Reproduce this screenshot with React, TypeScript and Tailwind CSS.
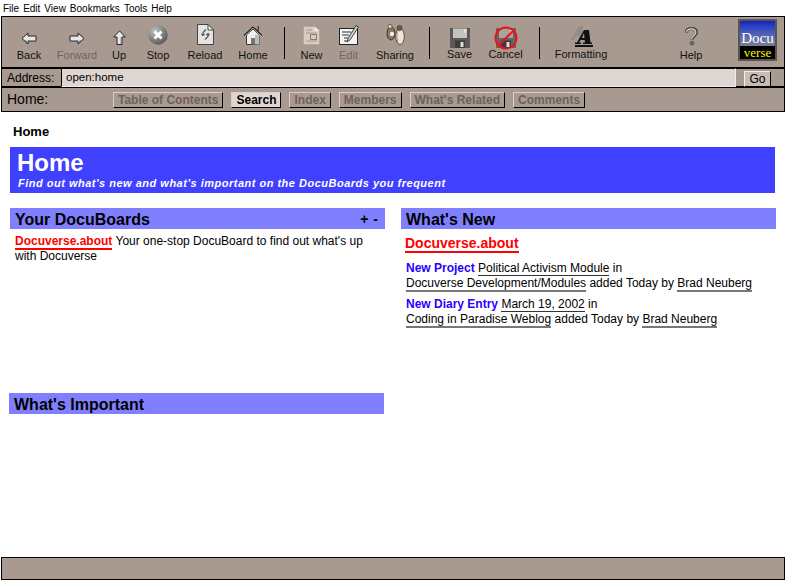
import type { ReactNode } from 'react';

const sans = { fontFamily: '"Liberation Sans", Arial, sans-serif' };

function Arrow({ flip }: { flip?: boolean }) {
  return (
    <svg width="16" height="13" viewBox="0 0 16 13" style={flip ? { transform: 'scaleX(-1)' } : undefined}>
      <path d="M1 6.5 L7 1 V4 H15 V9 H7 V12 Z" fill="#e6e6e6" stroke="#222" strokeWidth="1" />
      <path d="M7 8 H14.5 V9 H7 Z M7 9 V11 L3 7.5 Z" fill="#8c8c8c" />
    </svg>
  );
}

function UpIcon() {
  return (
    <svg width="13" height="15" viewBox="0 0 13 15">
      <path d="M6.5 0.8 L12.3 7 H9 V14.5 H4 V7 H0.7 Z" fill="#e8e8e8" stroke="#222" />
      <path d="M7.5 7.5 H8.5 V14 H7.5 Z" fill="#888" />
    </svg>
  );
}

function StopIcon() {
  return (
    <svg width="20" height="20" viewBox="0 0 20 20">
      <defs>
        <radialGradient id="stopBall" cx="35%" cy="30%" r="75%">
          <stop offset="0%" stopColor="#c4c4c4" />
          <stop offset="100%" stopColor="#555" />
        </radialGradient>
      </defs>
      <circle cx="10" cy="10" r="9.7" fill="url(#stopBall)" />
      <path d="M6.5 6.5 L13.5 13.5 M13.5 6.5 L6.5 13.5" stroke="#fff" strokeWidth="2.8" />
    </svg>
  );
}

function ReloadIcon() {
  return (
    <svg width="17" height="21" viewBox="0 0 17 21">
      <path d="M0.5 0.5 H11 L16.5 6 V20.5 H0.5 Z" fill="#e4e4e4" stroke="#444" />
      <path d="M11 0.5 V6 H16.5 Z" fill="#fff" stroke="#444" />
      <path d="M9 5.5 L6 8.5 V11.5 M6 11.5 L4.5 10 M6 11.5 L7.5 10" fill="none" stroke="#555" strokeWidth="1.2" />
      <path d="M8 15.5 L11 12.5 V9.5 M11 9.5 L9.5 11 M11 9.5 L12.5 11" fill="none" stroke="#555" strokeWidth="1.2" />
    </svg>
  );
}

function HomeIcon() {
  return (
    <svg width="20" height="20" viewBox="0 0 20 20">
      <path d="M14.5 1 H16 V6 H14.5 Z" fill="#444" />
      <path d="M1 10.5 L10 2 L19 10.5" fill="#f2f2f2" stroke="#222" strokeWidth="1.2" />
      <path d="M3.5 10 L10 4 L16.5 10 V19.5 H3.5 Z" fill="#f0f0f0" stroke="#333" />
      <path d="M12 9.5 L16.5 10 V19.5 H12 Z" fill="#bbb" />
      <rect x="8" y="13" width="4" height="6.5" fill="#777" />
    </svg>
  );
}

function NewIcon() {
  return (
    <svg width="17" height="19" viewBox="0 0 17 19">
      <path d="M0.5 0.5 H11.5 L16.5 5 V18.5 H0.5 Z" fill="#d8cdc0" stroke="#b5a898" />
      <path d="M11.5 0.5 V5 H16.5 Z" fill="#f3eee8" />
      <path d="M3 4 H9 M3 7 H14 M3 15 H14" stroke="#a89a8a" />
      <rect x="7.5" y="8.5" width="6" height="5" fill="none" stroke="#8a7d6f" />
    </svg>
  );
}

function EditIcon() {
  return (
    <svg width="20" height="20" viewBox="0 0 20 20">
      <rect x="0.5" y="3.5" width="18" height="16" fill="#f4f4f4" stroke="#222" />
      <path d="M3 7 H12 M3 10 H10 M5 13 H9 M5 16 H8" stroke="#333" />
      <path d="M17 0.5 L19.5 2 L11 15 L8 17 L9 13.5 Z" fill="#ccc" stroke="#222" strokeWidth="0.8" />
    </svg>
  );
}

function SharingIcon() {
  return (
    <svg width="19" height="21" viewBox="0 0 19 21">
      <ellipse cx="14" cy="12.5" rx="4.3" ry="8" fill="#efe6da" stroke="#5b5047" />
      <path d="M14 5 C11 7 10.5 15 13 20 C10 18 9.5 8 14 5 Z" fill="#8a7666" />
      <circle cx="13.5" cy="4" r="2.6" fill="#6f5d4e" stroke="#3e352d" strokeWidth="0.6" />
      <ellipse cx="5" cy="9.5" rx="4" ry="6.5" fill="#8a7666" stroke="#3e352d" />
      <circle cx="4" cy="2.5" r="2.1" fill="#d9ccbc" stroke="#3e352d" strokeWidth="0.6" />
      <circle cx="6" cy="10" r="2.2" fill="#f5eee5" />
    </svg>
  );
}

function DiskIcon({ cancel }: { cancel?: boolean }) {
  return (
    <svg width="24" height="24" viewBox="0 0 24 24" className="-mb-[5px]">
      <g transform="translate(2 2)">
        <rect x="0" y="0" width="20" height="20" fill={cancel ? '#666361' : '#5a5a5a'} />
        <rect x="3" y="0.5" width="14" height="9.5" fill={cancel ? '#a8a3a0' : '#c6c2be'} />
        <rect x="14.5" y="1" width="1.5" height="4" fill="#eee" />
        <rect x="5" y="12.5" width="10" height="7.5" fill="#3c3c3c" />
        <rect x="10.5" y="14" width="3" height="5" fill="#ddd" />
      </g>
      {cancel && (
        <g fill="none" stroke="#e8141c" strokeWidth="2">
          <circle cx="12" cy="12" r="10.5" />
          <path d="M4.5 19.5 L19.5 4.5" />
        </g>
      )}
    </svg>
  );
}

function FormatIcon() {
  return (
    <svg width="23" height="21" viewBox="0 0 23 21" className="-mb-[2px]">
      <path d="M0 14 L9 0 H13 V14 H9 V10 H6 L4 14 Z" fill="#8f8f8f" />
      <path
        fillRule="evenodd"
        d="M5 18 V16.5 H7 L14 4 H19 L20.5 16.5 H22 V18 H13 V16.5 H15 L14.7 14 H10.5 L9 16.5 H11 V18 Z M11.8 12 H14.5 L14 7 Z"
        fill="#111"
      />
      <rect x="5" y="19" width="18" height="2" fill="#111" />
    </svg>
  );
}

function HelpIcon() {
  return (
    <svg width="15" height="19" viewBox="0 0 15 21" className="-mb-[1px]">
      <path
        d="M2 6 C2 2.5 5 1.5 7.5 1.5 C11 1.5 13 3.2 13 6 C13 9.5 8 10 8 14"
        fill="none"
        stroke="#4a4a4a"
        strokeWidth="3.4"
      />
      <path
        d="M2 5.5 C2.5 3 5 2 7.5 2 C10 2 12.3 3.5 12.3 6 C12.3 9 7.8 9.5 7.6 13.5"
        fill="none"
        stroke="#d9d9d9"
        strokeWidth="1.3"
      />
      <circle cx="8" cy="18" r="2.7" fill="#666" />
    </svg>
  );
}

function ToolItem({
  label,
  width,
  muted,
  raised,
  icon,
}: {
  label: string;
  width: string;
  muted?: boolean;
  raised?: boolean;
  icon: ReactNode;
}) {
  return (
    <div className={`flex h-full flex-col items-center justify-end ${raised ? 'pb-[6px]' : 'pb-[5px]'} ${width}`}>
      <div className={`flex flex-1 items-end justify-center ${raised ? 'pb-[3px]' : 'pb-[4px]'}`}>{icon}</div>
      <span className={`text-[11px] leading-[13px] ${muted ? 'text-[#6f6560]' : 'text-[#111]'}`}>{label}</span>
    </div>
  );
}

function Separator({ className }: { className: string }) {
  return <div className={`mr-[6px] mt-[10px] h-[32px] w-[1px] shrink-0 bg-black ${className}`} />;
}

function NavButton({ label, active }: { label: string; active?: boolean }) {
  return (
    <span
      className={`flex h-[16px] items-center border border-t-[#d8cfc9] border-l-[#d8cfc9] border-r-black border-b-black px-[4px] text-[12px] font-bold ${
        active ? 'bg-[#e0d6d1] text-black' : 'bg-[#a99a91] text-[#6e615b]'
      }`}
    >
      {label}
    </span>
  );
}

function SectionHeader({ title, controls, className }: { title: string; controls?: boolean; className: string }) {
  return (
    <div className={`flex h-[21px] items-center justify-between bg-[#8080ff] pl-[5px] pr-[7px] pt-[2px] ${className}`}>
      <span className="text-[16px] font-bold text-black">{title}</span>
      {controls && (
        <span className="flex gap-[5px] text-[14px] font-bold text-black">
          <span>+</span>
          <span>-</span>
        </span>
      )}
    </div>
  );
}

function Link({ soft, children }: { soft?: boolean; children: ReactNode }) {
  return <span className={soft ? 'border-b-2 border-[#777]' : 'border-b border-[#333]'}>{children}</span>;
}

export default function App() {
  return (
    <div className="flex h-[581px] w-[787px] flex-col overflow-hidden bg-white text-black" style={sans}>
      <div className="flex h-[16px] shrink-0 items-center gap-[4px] pl-[3px] text-[10px] text-black">
        <span>File</span>
        <span>Edit</span>
        <span>View</span>
        <span>Bookmarks</span>
        <span>Tools</span>
        <span>Help</span>
      </div>

      <div className="ml-[1px] w-[784px] shrink-0 border border-black bg-[#a99a91]">
        <div className="flex h-[50px] pl-[6px]">
          <ToolItem label="Back" width="w-[42px]" icon={<Arrow />} />
          <ToolItem label="Forward" width="w-[54px]" muted icon={<Arrow flip />} />
          <ToolItem label="Up" width="w-[30px]" icon={<UpIcon />} />
          <ToolItem label="Stop" width="w-[48px]" icon={<StopIcon />} />
          <ToolItem label="Reload" width="w-[46px]" icon={<ReloadIcon />} />
          <ToolItem label="Home" width="w-[50px]" icon={<HomeIcon />} />
          <Separator className="ml-[6px]" />
          <ToolItem label="New" width="w-[41px]" icon={<NewIcon />} />
          <ToolItem label="Edit" width="w-[33px]" muted icon={<EditIcon />} />
          <ToolItem label="Sharing" width="w-[60px]" icon={<SharingIcon />} />
          <Separator className="ml-[4px]" />
          <ToolItem label="Save" width="w-[47px]" raised icon={<DiskIcon />} />
          <ToolItem label="Cancel" width="w-[45px]" raised icon={<DiskIcon cancel />} />
          <Separator className="ml-[11px]" />
          <ToolItem label="Formatting" width="w-[70px]" raised icon={<FormatIcon />} />
          <div className="w-[54px]" />
          <ToolItem label="Help" width="w-[42px]" icon={<HelpIcon />} />
          <div className="ml-[26px] mt-[2px] flex h-[42px] w-[39px] flex-col justify-end overflow-hidden border-2 border-[#5a5550] bg-gradient-to-b from-[#1a1ac8] via-[#6c74a8] to-[#8d8a3c]">
            <span
              className="text-center text-[15px] leading-[15px] text-white"
              style={{ fontFamily: '"Liberation Serif", serif' }}
            >
              Docu
            </span>
            <span
              className="bg-black text-center text-[13px] leading-[13px] text-[#f4f400]"
              style={{ fontFamily: '"Liberation Serif", serif' }}
            >
              verse
            </span>
          </div>
        </div>

        <div className="flex h-[21px] items-center border-y-2 border-t-black border-b-black pl-[5px]">
          <span className="w-[54px] text-[12px] text-black">Address:</span>
          <div className="flex h-[19px] w-[675px] items-center border border-t-black border-l-black border-r-[#eee] border-b-[#eee] bg-[#e0d6d1] pl-[4px] text-[11.5px]">
            open:home
          </div>
          <span className="ml-[8px] mt-[2px] flex h-[16px] w-[27px] items-center justify-center border border-t-[#eee] border-l-[#eee] border-r-black border-b-black bg-[#c9bcb5] text-[12px]">
            Go
          </span>
        </div>

        <div className="flex h-[23px] items-center pl-[5px]">
          <span className="w-[106px] text-[14px] text-black">Home:</span>
          <div className="flex gap-[8px]">
            <NavButton label="Table of Contents" />
            <NavButton label="Search" active />
            <NavButton label="Index" />
            <NavButton label="Members" />
            <NavButton label="What's Related" />
            <NavButton label="Comments" />
          </div>
        </div>
      </div>

      <div className="flex min-h-0 flex-1 flex-col">
        <div className="ml-[13px] mt-[11px] h-[24px] text-[13px] font-bold leading-[18px]">Home</div>
        <div className="ml-[10px] flex h-[46px] w-[765px] flex-col bg-[#4040ff] pl-[7px] text-white">
          <span className="mt-[2px] text-[24px] font-bold leading-[27px]">Home</span>
          <span className="pl-[1px] text-[11px] font-bold italic leading-[14px] tracking-[0.5px]">
            Find out what's new and what's important on the DocuBoards you frequent
          </span>
        </div>

        <div className="mt-[15px] flex">
          <div className="ml-[10px] w-[375px]">
            <SectionHeader title="Your DocuBoards" controls className="" />
            <p className="mt-[5px] h-[159px] pl-[5px] text-[12px] leading-[15px]">
              <span className="border-b-2 border-[#ff0000] font-bold text-[#ff0000]">Docuverse.about</span> Your
              one-stop DocuBoard to find out what's up
              <br />
              with Docuverse
            </p>
            <SectionHeader title="What's Important" className="-ml-[1px] w-[375px] pl-[4px]" />
          </div>

          <div className="ml-[16px] w-[375px]">
            <SectionHeader title="What's New" className="" />
            <div className="mt-[5px] pl-[4px] text-[14px] font-bold leading-[18px] text-[#ff0000]">
              <span className="border-b-2 border-[#ff0000]">Docuverse.about</span>
            </div>
            <p className="mt-[9px] pl-[5px] text-[12px] leading-[15px]">
              <span className="font-bold text-[#2a00ff]">New Project</span> <Link>Political Activism Module</Link> in
              <br />
              <Link soft>Docuverse Development/Modules</Link> added Today by <Link soft>Brad Neuberg</Link>
            </p>
            <p className="mt-[6px] pl-[5px] text-[12px] leading-[15px]">
              <span className="font-bold text-[#2a00ff]">New Diary Entry</span> <Link>March 19, 2002</Link> in
              <br />
              <Link soft>Coding in Paradise Weblog</Link> added Today by <Link soft>Brad Neuberg</Link>
            </p>
          </div>
        </div>
      </div>

      <div className="mb-[1px] ml-[1px] h-[23px] w-[784px] shrink-0 border border-black bg-[#a99a91]" />
    </div>
  );
}
